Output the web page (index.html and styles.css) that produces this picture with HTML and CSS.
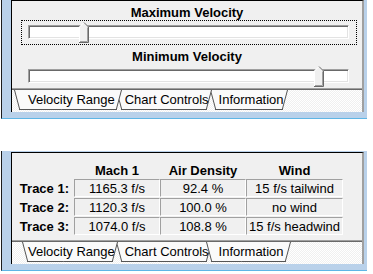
FILE: index.html
```html
<!DOCTYPE html>
<html lang="en">
<head>
  <meta charset="UTF-8">
  <title>Velocity Panels</title>
  <link rel="stylesheet" href="styles.css">
</head>
<body>
  <div class="win win-top">
    <div class="client">
      <div class="pane">
        <div class="caption">Maximum Velocity</div>
        <div class="slider focus">
          <div class="track"></div>
          <svg class="thumb" style="left:57px" width="10" height="21" viewBox="0 0 10 21">
            <polygon points="0,5 5,0 10,5 10,21 0,21" fill="#f0f0f0"/>
            <polyline points="0.5,20 0.5,5 5,0.5" fill="none" stroke="#fff"/>
            <polyline points="5,0.5 9.5,5 9.5,20.5 0,20.5" fill="none" stroke="#696969"/>
            <polyline points="8.5,5.5 8.5,19.5 1,19.5" fill="none" stroke="#a0a0a0"/>
          </svg>
        </div>
        <div class="caption second">Minimum Velocity</div>
        <div class="slider">
          <div class="track"></div>
          <svg class="thumb" style="left:292px" width="10" height="21" viewBox="0 0 10 21">
            <polygon points="0,5 5,0 10,5 10,21 0,21" fill="#f0f0f0"/>
            <polyline points="0.5,20 0.5,5 5,0.5" fill="none" stroke="#fff"/>
            <polyline points="5,0.5 9.5,5 9.5,20.5 0,20.5" fill="none" stroke="#696969"/>
            <polyline points="8.5,5.5 8.5,19.5 1,19.5" fill="none" stroke="#a0a0a0"/>
          </svg>
        </div>
      </div>
      <div class="tabs">
        <div class="tab first selected">Velocity Range</div>
        <div class="tab mid">Chart Controls</div>
        <div class="tab last">Information</div>
      </div>
    </div>
  </div>

  <div class="win win-bottom">
    <div class="client">
      <div class="pane info">
        <div class="grid">
          <div></div>
          <div class="head">Mach 1</div>
          <div class="head">Air Density</div>
          <div class="head">Wind</div>

          <div class="label">Trace 1:</div>
          <div class="cell">1165.3 f/s</div>
          <div class="cell">92.4 %</div>
          <div class="cell">15 f/s tailwind</div>

          <div class="label">Trace 2:</div>
          <div class="cell">1120.3 f/s</div>
          <div class="cell">100.0 %</div>
          <div class="cell">no wind</div>

          <div class="label">Trace 3:</div>
          <div class="cell">1074.0 f/s</div>
          <div class="cell">108.8 %</div>
          <div class="cell">15 f/s headwind</div>
        </div>
      </div>
      <div class="tabs">
        <div class="tab first">Velocity Range</div>
        <div class="tab mid">Chart Controls</div>
        <div class="tab last selected">Information</div>
      </div>
    </div>
  </div>
</body>
</html>
```

FILE: styles.css
```css
body {
  margin: 0;
  background: #fff;
  font-family: "Liberation Sans", Arial, sans-serif;
  font-size: 13px;
  color: #000;
}
.win {
  width: 350px;
  margin-left: 1px;
  border-left: 1px solid #1c1c1c;
  border-bottom: 1px solid #5fb6e6;
  padding: 0 6px 6px 9px;
  background: #b9d1ea;
}
.win-bottom {
  margin-top: 32px;
  padding-top: 1px;
}
.client {
  width: 350px;
  background: #f0f0f0;
  border-top: 1px solid #000;
  border-left: 1px solid #000;
  border-right: 2px solid #a0a0a0;
}
.pane {
  height: 88px;
  padding-top: 5px;
  box-sizing: border-box;
  border-bottom: 1px solid #a0a0a0;
}
.caption {
  font-weight: bold;
  text-align: center;
  line-height: 14px;
}
.caption.second {
  margin-top: 5px;
}
.slider {
  position: relative;
  height: 25px;
  box-sizing: border-box;
  margin: 0 5px 0 9px;
  padding: 4px 7px 0 6px;
  border: 1px dotted transparent;
}
.slider.focus {
  border-color: #000;
}
.track {
  height: 14px;
  box-sizing: border-box;
  background: #fff;
  border: 1px solid;
  border-color: #a0a0a0 #fff #fff #a0a0a0;
  box-shadow: inset 1px 1px #696969, inset -1px -1px #e3e3e3;
}
.thumb {
  position: absolute;
  top: 1px;
}
.tabs {
  display: flex;
  height: 22px;
  padding-left: 10px;
  border-top: 1px solid #696969;
  background: repeating-conic-gradient(#f0f0f0 0 25%, #fff 0 50%) 0 0 / 2px 2px;
}
.tab {
  position: relative;
  height: 20px;
  line-height: 20px;
  padding: 0 4px 0 6px;
  white-space: nowrap;
}
.tab::before,
.tab::after {
  content: "";
  position: absolute;
  top: 0;
  bottom: 0;
  width: 50%;
  background: #fafafa;
  border-bottom: 1px solid #555;
  z-index: -1;
}
.tab::before {
  left: 0;
  border-left: 1px solid #555;
  transform-origin: 0 0;
  transform: skewX(15deg);
}
.tab::after {
  right: 0;
  border-right: 1px solid #555;
  transform-origin: 100% 0;
  transform: skewX(-15deg);
}
.tab.first { z-index: 3; }
.tab.mid { z-index: 2; }
.tab.last { z-index: 1; }
.tab.mid,
.tab.last {
  margin-left: -3px;
  padding-left: 9px;
}
.tab.selected {
  z-index: 5;
  margin: 0 -3px 0 -8px;
  padding: 0 7px 0 14px;
}
.tab.last.selected {
  margin-left: -7px;
  padding-left: 13px;
}
.info {
  padding-top: 11px;
}
.grid {
  display: grid;
  grid-template-columns: 62px 86px 86px 97px;
  row-gap: 1px;
}
.head {
  font-weight: bold;
  text-align: center;
  line-height: 14px;
}
.label {
  font-weight: bold;
  text-align: right;
  padding-right: 5px;
  padding-top: 1px;
  line-height: 17px;
}
.cell {
  text-align: center;
  height: 15px;
  padding-top: 1px;
  line-height: 15px;
  border-top: 1px solid #a0a0a0;
  border-left: 1px solid #a0a0a0;
  border-bottom: 1px solid #fff;
  border-right: 1px solid #fff;
}
```
